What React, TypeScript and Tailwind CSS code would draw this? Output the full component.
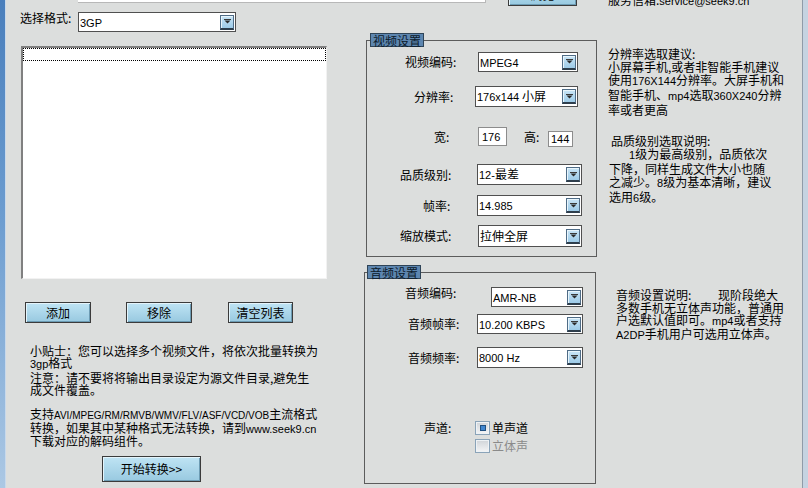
import React from "react";

function L({ children, s }: { children: React.ReactNode; s?: "10" | "11" }) {
  return (
    <span className={s === "10" ? "font-['Liberation_Sans',sans-serif] text-[10px]" : "font-['Liberation_Sans',sans-serif] text-[11px]"}>
      {children}
    </span>
  );
}

function Arrow() {
  return (
    <div className="w-[14px] h-[15px] mr-[1px] shrink-0 flex items-center justify-center border border-[#4f6c86] border-b-2 border-b-[#2e3e4c] bg-[linear-gradient(to_bottom,#c9e5f6,#9dcbe8)] shadow-[inset_1px_1px_0_#e8f5fc]">
      <svg width="7" height="5" viewBox="0 0 7 5">
        <path d="M0 0h7v1H0z" fill="#3a3a3a" />
        <path d="M0.5 1.5h6L3.5 4.5z" fill="#2a2a2a" />
      </svg>
    </div>
  );
}

function Select({ value, cls }: { value: React.ReactNode; cls: string }) {
  return (
    <div className={`flex items-center shrink-0 bg-white border border-[#505050] ${cls}`}>
      <span className="flex-1 pl-[1px] whitespace-nowrap overflow-hidden">{value}</span>
      <Arrow />
    </div>
  );
}

function Btn({ children, cls }: { children: React.ReactNode; cls: string }) {
  return (
    <button
      type="button"
      className={`flex items-center justify-center shrink-0 border border-[#3b3b3b] bg-[linear-gradient(to_bottom,#bfe4f4,#98c9e0)] shadow-[inset_1px_1px_0_#e4f4fb,inset_-1px_-1px_0_#6c9bb3] text-black ${cls}`}
    >
      {children}
    </button>
  );
}

function Check({ checked }: { checked?: boolean }) {
  return (
    <div className="w-[15px] h-[14px] shrink-0 flex items-center justify-center border border-[#8aa3b8] bg-[linear-gradient(to_bottom,#d0d4d8,#f4f5f6)] shadow-[inset_0_0_0_1px_#eef2f5]">
      {checked && <div className="w-[6px] h-[6px] bg-[#3f86d0] border border-[#1f4f80]" />}
    </div>
  );
}

export default function App() {
  return (
    <div className="w-[808px] h-[488px] overflow-hidden flex bg-[#dcdedd] text-[12px] leading-[12px] text-black font-['Noto_Sans_CJK_SC',sans-serif]">
      {/* left window frame */}
      <div className="w-[6px] shrink-0 border-r border-[#c8d9ec] bg-[linear-gradient(to_bottom,#4a7fbc,#6d9dd0_45%,#acc8e4)]" />

      <div className="w-[796px] shrink-0 flex flex-col">
        {/* top strip (cut off) */}
        <div className="h-[8px] shrink-0 flex items-start">
          <div className="ml-[72px] w-[408px] h-[3px] bg-white border-b border-r border-[#b8b8b8]" />
          <Btn cls="ml-[22px] w-[69px] h-[22px] -mt-[16px]">浏览</Btn>
          <div className="ml-[31px] -mt-[6px] whitespace-nowrap">
            服务信箱:<L>service@seek9.cn</L>
          </div>
        </div>

        <div className="flex flex-1">
          {/* left column */}
          <div className="w-[352px] shrink-0 flex flex-col">
            <div className="flex items-start mt-[4px] h-[20px]">
              <span className="ml-[14px] w-[58px] whitespace-nowrap">选择格式:</span>
              <Select value={<L>3GP</L>} cls="w-[158px] h-[20px]" />
            </div>

            <div className="ml-[15px] mt-[14px] w-[306px] h-[233px] bg-white border-t-2 border-l-2 border-r border-b border-t-[#808080] border-l-[#808080] border-r-[#f2f2f2] border-b-[#f2f2f2]">
              <div className="h-[13px] border border-dotted border-black" />
            </div>

            <div className="flex mt-[23px] h-[21px]">
              <Btn cls="ml-[19px] w-[66px] h-[21px]">添加</Btn>
              <Btn cls="ml-[35px] w-[66px] h-[21px]">移除</Btn>
              <Btn cls="ml-[36px] w-[65px] h-[21px]">清空列表</Btn>
            </div>

            <div className="ml-[24px] mt-[22px] whitespace-nowrap">
              <div>小贴士：您可以选择多个视频文件，将依次批量转换为</div>
              <div>
                <L>3gp</L>格式
              </div>
            </div>
            <div className="ml-[24px] mt-[2px] whitespace-nowrap">
              <div>注意：请不要将将输出目录设定为源文件目录,避免生</div>
              <div>成文件覆盖。</div>
            </div>
            <div className="ml-[24px] mt-[12px] whitespace-nowrap">
              <div>
                支持<L s="10">AVI/MPEG/RM/RMVB/WMV/FLV/ASF/VCD/VOB</L>主流格式
              </div>
              <div>
                转换，如果其中某种格式无法转换，请到<L>www.seek9.cn</L>
              </div>
              <div>下载对应的解码组件。</div>
            </div>

            <Btn cls="ml-[96px] mt-[9px] w-[99px] h-[26px]">开始转换&gt;&gt;</Btn>
          </div>

          {/* middle column */}
          <div className="w-[240px] shrink-0 flex flex-col">
            <fieldset className="ml-[8px] mt-[25px] w-[231px] border border-[#5c5c5c] pb-[9px]">
              <legend className="ml-[3px] h-[14px] px-[2px] leading-[13px] bg-[#5d86b0] border border-[#2f4457] text-[#0b1a2a]">视频设置</legend>
              <div className="flex items-center mt-[5px] h-[20px]">
                <span className="ml-[38px] w-[73px] whitespace-nowrap">视频编码:</span>
                <Select value={<L>MPEG4</L>} cls="w-[100px] h-[20px]" />
              </div>
              <div className="flex items-center mt-[14px] h-[21px]">
                <span className="ml-[47px] w-[61px] whitespace-nowrap">分辨率:</span>
                <Select value={<><L>176x144</L> 小屏</>} cls="w-[103px] h-[21px]" />
              </div>
              <div className="flex items-center mt-[20px] h-[19px]">
                <span className="ml-[67px] w-[44px] whitespace-nowrap">宽:</span>
                <div className="w-[29px] h-[19px] shrink-0 flex items-center pl-[3px] bg-white border border-[#8c8c8c]">
                  <L>176</L>
                </div>
                <span className="ml-[17px] w-[24px] whitespace-nowrap">高:</span>
                <div className="w-[25px] h-[16px] shrink-0 self-end -mb-[1px] flex items-center pl-[2px] bg-white border border-[#8c8c8c]">
                  <L>144</L>
                </div>
              </div>
              <div className="flex items-center mt-[18px] h-[21px]">
                <span className="ml-[33px] w-[77px] whitespace-nowrap">品质级别:</span>
                <Select value={<><L>12-</L>最差</>} cls="w-[105px] h-[21px]" />
              </div>
              <div className="flex items-center mt-[10px] h-[21px]">
                <span className="ml-[56px] w-[54px] whitespace-nowrap">帧率:</span>
                <Select value={<L>14.985</L>} cls="w-[105px] h-[21px]" />
              </div>
              <div className="flex items-center mt-[9px] h-[22px]">
                <span className="ml-[33px] w-[78px] whitespace-nowrap">缩放模式:</span>
                <Select value="拉伸全屏" cls="w-[104px] h-[22px]" />
              </div>
            </fieldset>

            <fieldset className="ml-[6px] mt-[8px] w-[232px] border border-[#5c5c5c] pb-[30px]">
              <legend className="ml-[2px] h-[14px] px-[2px] leading-[13px] bg-[#5d86b0] border border-[#2f4457] text-[#0b1a2a]">音频设置</legend>
              <div className="flex items-start mt-[8px] h-[20px]">
                <span className="ml-[40px] w-[86px] whitespace-nowrap">音频编码:</span>
                <Select value={<L>AMR-NB</L>} cls="w-[92px] h-[20px]" />
              </div>
              <div className="flex items-center mt-[7px] h-[20px]">
                <span className="ml-[43px] w-[69px] whitespace-nowrap">音频帧率:</span>
                <Select value={<L>10.200 KBPS</L>} cls="w-[106px] h-[20px]" />
              </div>
              <div className="flex items-center mt-[13px] h-[21px]">
                <span className="ml-[43px] w-[69px] whitespace-nowrap">音频频率:</span>
                <Select value={<L>8000 Hz</L>} cls="w-[106px] h-[21px]" />
              </div>
              <div className="flex items-center mt-[53px] h-[14px]">
                <span className="ml-[59px] w-[51px] whitespace-nowrap">声道:</span>
                <Check checked />
                <span className="ml-[2px] whitespace-nowrap">单声道</span>
              </div>
              <div className="flex items-center mt-[4px] h-[14px]">
                <div className="ml-[110px]">
                  <Check />
                </div>
                <span className="ml-[2px] whitespace-nowrap text-[#8a8a8a]">立体声</span>
              </div>
            </fieldset>
          </div>

          {/* right column */}
          <div className="flex-1 pl-[10px] flex flex-col">
            <div className="mt-[39px] leading-[13px] whitespace-nowrap">
              <div>分辨率选取建议:</div>
              <div>小屏幕手机,或者非智能手机建议</div>
              <div>
                使用<L>176X144</L>分辨率。大屏手机和
              </div>
              <div>
                智能手机、<L>mp4</L>选取<L>360X240</L>分辨
              </div>
              <div>率或者更高</div>
            </div>
            <div className="mt-[18px] leading-[13px] whitespace-nowrap">
              <div className="pl-[3px]">品质级别选取说明:</div>
              <div className="pl-[21px]">
                <L>1</L>级为最高级别，品质依次
              </div>
              <div className="pl-[1px]">下降，同样生成文件大小也随</div>
              <div className="pl-[1px]">
                之减少。<L>8</L>级为基本清晰，建议
              </div>
              <div className="pl-[1px]">
                选用<L>6</L>级。
              </div>
            </div>
            <div className="mt-[84px] ml-[8px] leading-[12.5px] whitespace-nowrap">
              <div>
                <span className="inline-block w-[102px]">音频设置说明:</span>现阶段绝大
              </div>
              <div>多数手机无立体声功能，普通用</div>
              <div>
                户选默认值即可。<L>mp4</L>或者支持
              </div>
              <div>
                <L>A2DP</L>手机用户可选用立体声。
              </div>
            </div>
          </div>
        </div>
      </div>

      {/* right window frame */}
      <div className="w-[6px] shrink-0 border-l border-[#8f9ba8] bg-[#c5d3e1]" />
    </div>
  );
}
